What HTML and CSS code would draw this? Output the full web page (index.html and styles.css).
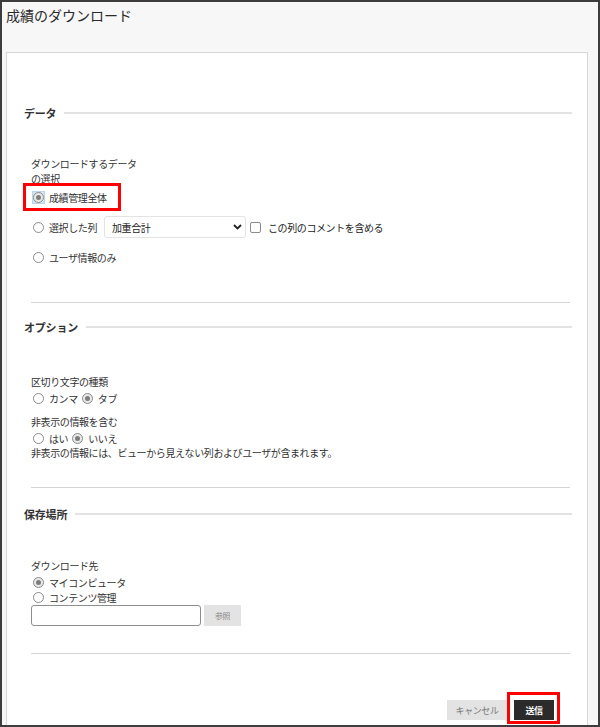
FILE: index.html
```html
<!DOCTYPE html>
<html lang="ja">
<head>
<meta charset="utf-8">
<title>成績のダウンロード</title>
<link rel="stylesheet" href="styles.css">
</head>
<body>
<div class="frame">
  <h1 class="title">成績のダウンロード</h1>
  <div class="panel">
    <div class="sec-head s1"><span>データ</span><i class="rule"></i></div>
    <div class="field-label l1">ダウンロードするデータ<br>の選択</div>
    <div class="choices">
      <div class="row">
        <span class="focus"><span class="radio on"></span></span><span class="lbl">成績管理全体</span>
        <span class="mark mark-a"></span>
      </div>
      <div class="row">
        <span class="radio"></span><span class="lbl">選択した列</span>
        <span class="select">加重合計<svg class="chev" width="9" height="6" viewBox="0 0 9 6"><polyline points="1,1 4.5,4.5 8,1" fill="none" stroke="#222" stroke-width="1.8"/></svg></span>
        <span class="check"></span><span class="lbl lbl-c">この列のコメントを含める</span>
      </div>
      <div class="row">
        <span class="radio"></span><span class="lbl">ユーザ情報のみ</span>
      </div>
    </div>
    <div class="sep sep1"></div>

    <div class="sec-head s2"><span>オプション</span><i class="rule"></i></div>
    <div class="field-label l2">区切り文字の種類</div>
    <div class="inline-row r1">
      <span class="radio"></span><span class="lbl">カンマ</span>
      <span class="radio on"></span><span class="lbl">タブ</span>
    </div>
    <div class="field-label l3">非表示の情報を含む</div>
    <div class="inline-row r1">
      <span class="radio"></span><span class="lbl">はい</span>
      <span class="radio on"></span><span class="lbl">いいえ</span>
    </div>
    <div class="desc">非表示の情報には、ビューから見えない列およびユーザが含まれます。</div>
    <div class="sep sep2"></div>

    <div class="sec-head s3"><span>保存場所</span><i class="rule"></i></div>
    <div class="field-label l4">ダウンロード先</div>
    <div class="inline-row r1">
      <span class="radio on"></span><span class="lbl">マイコンピュータ</span>
    </div>
    <div class="inline-row">
      <span class="radio"></span><span class="lbl">コンテンツ管理</span>
    </div>
    <div class="file-row">
      <span class="text-input"></span><span class="browse">参照</span>
    </div>
    <div class="sep sep3"></div>

    <div class="actions">
      <span class="btn cancel">キャンセル</span>
      <span class="btn submit">送信<span class="mark mark-b"></span></span>
    </div>
  </div>
</div>
</body>
</html>
```

FILE: styles.css
```css
* { box-sizing: border-box; }
html, body { margin: 0; padding: 0; }
body {
  font-family: "Noto Sans CJK JP", "Noto Sans", sans-serif;
  color: #333;
  background: #fff;
}
.frame {
  width: 600px;
  height: 727px;
  border: 2px solid #3d3d3d;
  background: #f7f7f7;
  overflow: hidden;
  display: flex;
  flex-direction: column;
}
.title {
  margin: 3px 0 0 4px;
  font-size: 14px;
  line-height: 20px;
  font-weight: normal;
  color: #2b2b2b;
}
.panel {
  margin: 27px 10px 0 4px;
  flex: 1;
  min-height: 700px;
  background: #fff;
  border: 1px solid #d6d6d6;
  border-bottom: none;
  padding: 0 15px 0 17px;
  font-size: 10px;
  line-height: 15px;
  letter-spacing: -0.4px;
  display: flex;
  flex-direction: column;
}
.sec-head {
  display: flex;
  align-items: center;
  height: 14px;
  font-size: 11px;
  font-weight: bold;
  color: #333;
  letter-spacing: -0.2px;
}
.sec-head .rule {
  flex: 1;
  height: 2px;
  background: #e2e2e2;
  margin-left: 8px;
}
.s1 { margin-top: 53px; }
.s2 { margin-top: 17px; }
.s3 { margin-top: 19px; }

.field-label { margin-left: 7px; color: #333; }
.l1 { margin-top: 36px; }
.l2 { margin-top: 40px; }
.l3 { margin-top: 8px; }
.l4 { margin-top: 37px; }

.choices { margin-top: -4px; margin-left: 7px; }
.row {
  position: relative;
  height: 30px;
  display: flex;
  align-items: center;
}
.radio {
  display: inline-block;
  width: 11px;
  height: 11px;
  border: 1px solid #8c8c8c;
  border-radius: 50%;
  background: #fff;
  margin-left: 2px;
  position: relative;
  flex: none;
}
.radio.on { background: #e9e9e9; border-color: #8a8a8a; }
.radio.on::after {
  content: "";
  position: absolute;
  left: 2px; top: 2px;
  width: 5px; height: 5px;
  border-radius: 50%;
  background: #7d7d7d;
}
.focus {
  display: inline-flex;
  align-items: center;
  justify-content: center;
  width: 13px;
  height: 13px;
  margin-left: 1px;
  background: #d6e5f5;
  border: 1px solid #bcd3ec;
  flex: none;
}
.focus .radio { margin-left: 0; }
.lbl { margin-left: 5px; margin-right: 0; white-space: nowrap; }
.focus + .lbl { margin-left: 4px; }
.select {
  margin-left: 7px;
  width: 142px;
  height: 22px;
  border: 1px solid #e3e3e3;
  border-radius: 3px;
  padding-left: 7px;
  display: flex;
  align-items: center;
  justify-content: space-between;
  padding-right: 3px;
  color: #222;
}
.check {
  display: inline-block;
  width: 11px;
  height: 11px;
  border: 1px solid #8c8c8c;
  border-radius: 2px;
  margin-left: 4px;
  flex: none;
}
.lbl-c { margin-left: 7px; color: #222; }

.mark {
  position: absolute;
  border: 3px solid #ff0000;
  pointer-events: none;
}
.mark-a { left: -8px; top: 1px; width: 98px; height: 28px; }

.sep {
  height: 1px;
  background: #d4d4d4;
  margin-left: 7px;
  margin-right: 2px;
}
.sep1 { margin-top: 30px; }
.sep2 { margin-top: 28px; }
.sep3 { margin-top: 27px; }

.inline-row {
  margin-left: 7px;
  display: flex;
  align-items: center;
  height: 15px;
}
.inline-row .lbl + .radio { margin-left: 4px; }
.r1 { margin-top: 2px; }
.desc { margin-left: 7px; line-height: 13px; }

.file-row {
  margin-left: 7px;
  display: flex;
  align-items: center;
  height: 21px;
}
.text-input {
  width: 170px;
  height: 21px;
  border: 1px solid #8e8e8e;
  border-radius: 3px;
  background: #fff;
}
.browse {
  margin-left: 3px;
  width: 37px;
  height: 21px;
  background: #e3e3e3;
  color: #8a8a8a;
  font-size: 8px;
  display: flex;
  align-items: center;
  justify-content: center;
}

.actions {
  margin-top: 46px;
  display: flex;
  justify-content: flex-end;
  padding-right: 18px;
  gap: 7px;
}
.btn {
  height: 20px;
  display: flex;
  align-items: center;
  justify-content: center;
  font-size: 9px;
}
.cancel { width: 60px; background: #e3e3e3; color: #777; }
.submit { width: 40px; background: #2b2b2b; color: #fff; font-weight: bold; position: relative; }
.mark-b { left: -7px; top: -8px; width: 53px; height: 32px; }
```
